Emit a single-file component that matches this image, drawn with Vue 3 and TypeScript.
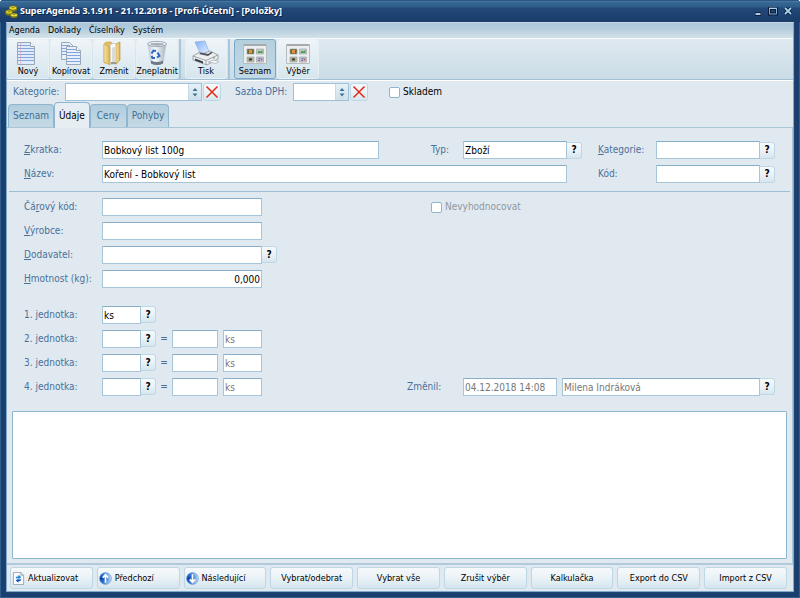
<script setup lang="ts">
import { ref } from 'vue'

interface Tool {
  label: string
  icon: string
  active?: boolean
}

interface UnitRow {
  n: number
  unit: string
  factor: string
  base: string
}

const menu: string[] = ['Agenda', 'Doklady', 'Číselníky', 'Systém']

const toolGroups: Tool[][] = [
  [
    { label: 'Nový', icon: 'new' },
    { label: 'Kopírovat', icon: 'copy' },
    { label: 'Změnit', icon: 'edit' },
    { label: 'Zneplatnit', icon: 'bin' },
  ],
  [{ label: 'Tisk', icon: 'print' }],
  [
    { label: 'Seznam', icon: 'grid', active: true },
    { label: 'Výběr', icon: 'grid' },
  ],
]

const tabs: string[] = ['Seznam', 'Údaje', 'Ceny', 'Pohyby']
const activeTab = ref('Údaje')

const shortName = ref('Bobkový list 100g')
const fullName = ref('Koření - Bobkový list')
const kind = ref('Zboží')
const category = ref('')
const code = ref('')
const barcode = ref('')
const maker = ref('')
const supplier = ref('')
const weight = ref('0,000')
const note = ref('')
const inStock = ref(false)

const firstUnit = ref('ks')
const units = ref<UnitRow[]>([
  { n: 2, unit: '', factor: '', base: 'ks' },
  { n: 3, unit: '', factor: '', base: 'ks' },
  { n: 4, unit: '', factor: '', base: 'ks' },
])

const actions: { label: string; icon?: string }[] = [
  { label: 'Aktualizovat', icon: 'refresh' },
  { label: 'Předchozí', icon: 'up' },
  { label: 'Následující', icon: 'down' },
  { label: 'Vybrat/odebrat' },
  { label: 'Vybrat vše' },
  { label: 'Zrušit výběr' },
  { label: 'Kalkulačka' },
  { label: 'Export do CSV' },
  { label: 'Import z CSV' },
]
</script>

<template>
  <div class="window">
    <svg class="defs" width="0" height="0" aria-hidden="true">
      <defs>
        <linearGradient id="folder" x1="0" x2="1"><stop offset="0" stop-color="#f9e5a4" /><stop offset="1" stop-color="#d9af55" /></linearGradient>
        <linearGradient id="glass" x1="0" x2="1"><stop offset="0" stop-color="#c3cdd6" /><stop offset=".4" stop-color="#f6fafc" /><stop offset="1" stop-color="#a9b5bf" /></linearGradient>
        <linearGradient id="paper" x1="0" y1="0" x2="1" y2="1"><stop offset="0" stop-color="#7fb0ff" /><stop offset="1" stop-color="#eaf3ff" /></linearGradient>
        <radialGradient id="ball" cx=".15" cy=".5" r=".9"><stop offset="0" stop-color="#0a3fa8" /><stop offset=".5" stop-color="#3f86d8" /><stop offset="1" stop-color="#e4eefa" /></radialGradient>
      </defs>
    </svg>

    <header class="titlebar">
      <svg class="logo" viewBox="0 0 13 13" aria-hidden="true">
        <ellipse cx="8" cy="4" rx="4" ry="2.6" fill="#8a8210" />
        <ellipse cx="8" cy="3" rx="4" ry="2.2" fill="#e8d92c" stroke="#4b4a0c" stroke-width=".6" />
        <ellipse cx="4" cy="8" rx="3.6" ry="2.6" fill="#8a8210" />
        <ellipse cx="4" cy="7" rx="3.6" ry="2.2" fill="#d8cc24" stroke="#4b4a0c" stroke-width=".6" />
        <ellipse cx="9" cy="11" rx="3.6" ry="1.9" fill="#8a8210" />
        <ellipse cx="9" cy="10" rx="3.6" ry="1.9" fill="#f1e545" stroke="#4b4a0c" stroke-width=".6" />
        <path d="M6.5 2.6h3M3 6.6h2.4M7.5 9.6h3" stroke="#7d760c" stroke-width=".8" />
      </svg>
      <h1>SuperAgenda 3.1.911 - 21.12.2018 - [Profi-Účetní] - [Položky]</h1>
      <div class="winbuttons">
        <button type="button" aria-label="Minimalizovat">
          <svg viewBox="0 0 10 10"><path d="M2 8h6" stroke="#081c3a" stroke-width="3.6" /><path d="M2.500 8h5" stroke="#c4dfee" stroke-width="1.800" /></svg>
        </button>
        <button type="button" aria-label="Maximalizovat">
          <svg viewBox="0 0 10 10"><path d="M1.500 2.500h7v5.500h-7z" fill="#1d4473" stroke="#081c3a" stroke-width="3" /><path d="M1.500 2.500h7v5.500h-7z" fill="none" stroke="#86b2cf" /><path d="M1 2.200h8" stroke="#c4dfee" /></svg>
        </button>
        <button type="button" aria-label="Zavřít">
          <svg viewBox="0 0 10 10"><path d="M2 2l6 6M8 2l-6 6" stroke="#081c3a" stroke-width="3.600" /><path d="M2 2l6 6M8 2l-6 6" stroke="#a9d2ea" stroke-width="1.800" /></svg>
        </button>
      </div>
    </header>

    <div class="body">
      <nav class="menubar">
        <a v-for="m in menu" :key="m" href="#">{{ m }}</a>
      </nav>

      <div class="toolbar">
        <div v-for="(group, i) in toolGroups" :key="i" class="toolgroup">
          <button v-for="t in group" :key="t.label" type="button" class="tool" :class="{ active: t.active }">
            <svg v-if="t.icon === 'new'" viewBox="0 0 28 26">
              <path d="M3.500 2.500h13l4 4v18h-17z" fill="#dfeafa" stroke="#9aa8b8" />
              <path d="M16.500 2.500v4h4" fill="#fff" stroke="#9aa8b8" />
              <path d="M4 5.500h12M4 8.500h16M4 11.500h16M4 14.500h16M4 17.500h16M4 20.500h16" stroke="#82a6dc" />
              <path d="M6.500 3v21" stroke="#d99ba6" stroke-width=".5" />
            </svg>
            <svg v-else-if="t.icon === 'copy'" viewBox="0 0 28 26">
              <path d="M4.500 2.500h8l4 4v13h-12z" fill="#e6effb" stroke="#9aa8b8" />
              <path d="M5 5.500h8M5 8.500h8M5 11.500h8M5 14.500h8" stroke="#82a6dc" />
              <path d="M9.500 6.500h10l4 4v14h-14z" fill="#e6effb" stroke="#9aa8b8" />
              <path d="M19.500 6.500v4h4" fill="#fff" stroke="#9aa8b8" />
              <path d="M10 9.500h9M10 12.500h13M10 15.500h13M10 18.500h13M10 21.500h13" stroke="#82a6dc" />
            </svg>
            <svg v-else-if="t.icon === 'edit'" viewBox="0 0 28 26">
              <path d="M4 4l2-2h5l2 2v19H4z" fill="#e4bd66" stroke="#c9a14c" stroke-width=".6" />
              <path d="M10 5q3-3 7-1v20h-7z" fill="#fbfbf8" stroke="#b5b5ad" stroke-width=".6" />
              <path d="M12 8q2-2 3 0v14h-3z" fill="#d9dbd9" />
              <path d="M16 4l4-2v18l-4 4z" fill="url(#folder)" stroke="#b98a31" stroke-width=".6" />
              <path d="M4 4l6 3.500V25l-6-3z" fill="url(#folder)" stroke="#c9a14c" stroke-width=".6" />
              <path d="M11 22h5v2h-5z" fill="#9b9b94" />
            </svg>
            <svg v-else-if="t.icon === 'bin'" viewBox="0 0 28 26">
              <path d="M5 4l3 19q6 3 12 0l3-19z" fill="url(#glass)" stroke="#b4c0ca" stroke-width=".6" />
              <path d="M8 20.500q6 3 12 0v3q-6 3-12 0z" fill="#6f7a84" />
              <ellipse cx="14" cy="4" rx="9.500" ry="2.600" fill="#eef2f5" stroke="#8d98a2" stroke-width=".8" />
              <ellipse cx="14" cy="4.300" rx="7" ry="1.400" fill="#a3afb9" />
              <g fill="none" stroke="#2a67c8" stroke-width="2"><path d="M8.500 13.500l2-3 2.500.5" /><path d="M14.500 12.500l2 3.500-2.500 1.500" /><path d="M12 18H9.500L8.500 16" /></g>
            </svg>
            <svg v-else-if="t.icon === 'print'" viewBox="0 0 28 26">
              <path d="M3 2l10-1 4 11-8 3z" fill="url(#paper)" stroke="#8ba4cc" stroke-width=".6" />
              <path d="M1 16l7-4 2 2 8-3 8 4v4l-11 6-14-5z" fill="#eceef0" stroke="#81868c" stroke-width=".7" />
              <path d="M1 16l13 4.500L26 15M14 20.500V25" fill="none" stroke="#8d9298" stroke-width=".8" />
              <path d="M3 18.500l8 3v2l-8-3z" fill="#373c42" />
              <path d="M7 14l2-1.500 7 1.500 3-2 2 .5-5 3.500z" fill="#4f555c" />
              <path d="M16 22l8 1.500 3-2-5-1.500z" fill="#f6f8fa" stroke="#8d9298" stroke-width=".5" />
              <circle cx="22" cy="18" r=".8" fill="#47a055" />
            </svg>
            <svg v-else viewBox="0 0 28 26">
              <path d="M2.500 4.500h23v19h-23z" fill="#eceeef" stroke="#b7bcbf" />
              <path d="M3 5h22" stroke="#a6abae" stroke-width="2" />
              <g stroke="#a0a6a8" stroke-width=".7"><path fill="#6b6236" d="M6 9h7v5H6z" /><path fill="#c3d0c4" d="M15.500 9h7v5h-7z" /><path fill="#b9baa6" d="M6 17h7v5H6z" /><path fill="#bfc5d3" d="M15.500 17h7v5h-7z" /></g>
              <path d="M8 10h3v3H8z" fill="#e79334" /><path d="M16.500 12.500l1.500-2 1.300 1 2.200-1.500v3h-5z" fill="#4b9d55" />
              <path d="M7.500 18.500l3-.5 1 2-3 1z" fill="#4a4930" /><path d="M17 20h2v1h-2zM20 18.500h1.500v2H20z" fill="#c3616d" /><path d="M17.500 18h2v1.500h-2z" fill="#5b7fc4" />
            </svg>
            <span>{{ t.label }}</span>
          </button>
        </div>
      </div>

      <div class="filters">
        <label for="f-cat">Kategorie:</label>
        <span class="combo wide">
          <select id="f-cat"><option></option></select>
          <svg viewBox="0 0 12 16"><path d="M3.500 7L6 4l2.500 3zM3.500 9.500h5L6 12.500z" fill="#3d7299" /></svg>
        </span>
        <button type="button" class="clear" aria-label="Zrušit kategorii">
          <svg viewBox="0 0 14 14"><path d="M1.500 1.500l11 11M12.500 1.500l-11 11" stroke="#e32a14" stroke-width="1.500" /></svg>
        </button>
        <label for="f-vat" class="vat">Sazba DPH:</label>
        <span class="combo">
          <select id="f-vat"><option></option></select>
          <svg viewBox="0 0 12 16"><path d="M3.500 7L6 4l2.500 3zM3.500 9.500h5L6 12.500z" fill="#3d7299" /></svg>
        </span>
        <button type="button" class="clear" aria-label="Zrušit sazbu">
          <svg viewBox="0 0 14 14"><path d="M1.500 1.500l11 11M12.500 1.500l-11 11" stroke="#e32a14" stroke-width="1.500" /></svg>
        </button>
        <label class="check stock"><input v-model="inStock" type="checkbox" />Skladem</label>
      </div>

      <div class="tabs" role="tablist">
        <button
          v-for="t in tabs"
          :key="t"
          type="button"
          role="tab"
          :aria-selected="t === activeTab"
          :class="{ active: t === activeTab }"
          @click="activeTab = t"
        >{{ t }}</button>
      </div>

      <main class="page">
        <section class="fields head">
          <label for="short"><u>Z</u>kratka:</label>
          <input id="short" v-model="shortName" type="text" />
          <label for="kind" class="typ">Typ:</label>
          <input id="kind" v-model="kind" type="text" />
          <button type="button" class="help">?</button>
          <label for="cat" class="second"><u>K</u>ategorie:</label>
          <input id="cat" v-model="category" type="text" />
          <button type="button" class="help">?</button>

          <label for="full"><u>N</u>ázev:</label>
          <input id="full" v-model="fullName" type="text" class="span-name" />
          <label for="code" class="second code-label">Kód:</label>
          <input id="code" v-model="code" type="text" />
          <button type="button" class="help">?</button>
        </section>

        <section class="fields details">
          <label for="bar" class="first">Čá<u>r</u>ový kód:</label>
          <input id="bar" v-model="barcode" type="text" class="mid" />
          <label class="check muted noeval"><input type="checkbox" disabled />Nevyhodnocovat</label>

          <label for="maker" class="first"><u>V</u>ýrobce:</label>
          <input id="maker" v-model="maker" type="text" class="mid" />

          <label for="supp" class="first"><u>D</u>odavatel:</label>
          <div class="line">
            <input id="supp" v-model="supplier" type="text" class="mid" />
            <button type="button" class="help">?</button>
          </div>

          <label for="weight" class="first"><u>H</u>motnost (kg):</label>
          <input id="weight" v-model="weight" type="text" class="mid number" />
        </section>

        <section class="fields units">
          <label for="unit1" class="first">1. jednotka:</label>
          <div class="line">
            <input id="unit1" v-model="firstUnit" type="text" class="unit" />
            <button type="button" class="help">?</button>
          </div>
          <template v-for="u in units" :key="u.n">
            <label :for="'unit' + u.n" class="first">{{ u.n }}. jednotka:</label>
            <div class="line">
              <input :id="'unit' + u.n" v-model="u.unit" type="text" class="unit" />
              <button type="button" class="help">?</button>
              <span class="eq">=</span>
              <input v-model="u.factor" type="text" class="factor" :aria-label="'Přepočet ' + u.n" />
              <input :value="u.base" type="text" class="base" disabled :aria-label="'Základní jednotka ' + u.n" />
            </div>
          </template>
          <label for="changed" class="changed-label">Změnil:</label>
          <div class="line changed">
            <input id="changed" type="text" class="date" value="04.12.2018 14:08" disabled />
            <input type="text" class="user" value="Milena Indráková" disabled aria-label="Uživatel" />
            <button type="button" class="help">?</button>
          </div>
        </section>

        <textarea v-model="note" aria-label="Poznámka"></textarea>
      </main>

      <footer class="actions">
        <button v-for="a in actions" :key="a.label" type="button" :class="{ iconic: a.icon }">
          <svg v-if="a.icon === 'refresh'" viewBox="0 0 14 14">
            <path d="M1.500.500h8l3 3v10h-11z" fill="#fafcfe" stroke="#9aa5b0" />
            <path d="M9.500.500v3h3" fill="none" stroke="#9aa5b0" />
            <path d="M4 7q0-2.500 3-2.500V3l3 2.500L7 8V6.500q-1.500 0-3 .5z" fill="#1f86dc" />
            <path d="M10 7.500q0 2.500-3 2.500v1.500L4 9.200 7 7v1.300q1.500 0 3-.8z" fill="#1552b4" />
          </svg>
          <svg v-else-if="a.icon" viewBox="0 0 14 14">
            <circle cx="7" cy="7" r="6.400" fill="url(#ball)" stroke="#5c8fcd" stroke-width=".6" />
            <path v-if="a.icon === 'up'" d="M7 11.500V3.500M4 6l3-3 3 3" fill="none" stroke="#fff" stroke-width="1.800" />
            <path v-else d="M7 2.500v8M4 8l3 3 3-3" fill="none" stroke="#fff" stroke-width="1.800" />
          </svg>
          <span>{{ a.label }}</span>
        </button>
      </footer>
    </div>
  </div>
</template>

<style>
body {
  margin: 0;
  background: #fff;
}
</style>

<style scoped>
* {
  box-sizing: border-box;
}

.window {
  display: flex;
  flex-direction: column;
  min-height: 100vh;
  padding: 0 6px 6px;
  border-radius: 4px 4px 0 0;
  background: #1d4473;
  box-shadow: inset 1px 1px #2f5f8f, inset -1px -1px #2f5f8f, inset 5px -5px #1a3e6d, inset -5px 0 #1a3e6d;
  font: 10px/14px "DejaVu Sans Condensed", "DejaVu Sans", "Noto Sans", sans-serif;
  color: #000;
}

.defs {
  position: absolute;
}

button,
input,
select,
textarea {
  margin: 0;
  font: inherit;
  color: inherit;
}

button {
  padding: 0;
  border: 1px solid #bdd7e4;
  border-radius: 3px;
  background: linear-gradient(#f6f9fc, #eaf2f7 50%, #d5e6ee);
}

.titlebar {
  display: flex;
  align-items: center;
  height: 22px;
  margin: 0 -6px;
  padding: 0 7px 0 5px;
  border-radius: 4px 4px 0 0;
  background: linear-gradient(#2b5583 0 1px, #4478a2 1px 2px, #386894 2px, #2d5c8a 7px, #23497a 8px, #193c69);
}

.logo {
  width: 13px;
  height: 13px;
}

h1 {
  flex: 1;
  margin: 0 0 0 2px;
  font: bold 9px/14px "Noto Sans", "Open Sans", sans-serif;
  color: #fff;
  text-shadow: 1px 1px #0c2444;
}

.winbuttons {
  display: flex;
  gap: 5px;
}

.winbuttons button {
  width: 10px;
  height: 10px;
  border: 0;
  background: none;
}

svg {
  display: block;
}

.body {
  display: flex;
  flex: 1;
  flex-direction: column;
  border: 1px solid #7fa9c9;
  border-top-color: #c4d9e5;
  background: #e1e9f0;
}

.menubar {
  display: flex;
  gap: 8px;
  height: 16px;
  padding: 0 2px;
  border-bottom: 1px solid #f6fafc;
  background: linear-gradient(#aac6d8, #b4cddc 40%, #d3e2ea);
  font-size: 9px;
}

.menubar a {
  color: #000;
  text-decoration: none;
}

.toolbar {
  display: flex;
  height: 41px;
  border-bottom: 1px solid #a3bfd3;
  background: linear-gradient(#e1e9f0, #c9dce6);
}

.toolgroup {
  display: flex;
  gap: 1px;
}

.toolgroup + .toolgroup {
  margin-left: 1px;
  padding-left: 4px;
  border-left: 2px solid #a9c6d8;
}

.tool {
  display: flex;
  flex-direction: column;
  align-items: center;
  width: 42px;
  height: 40px;
  border-color: #e6f0f5;
  background: linear-gradient(#eff4f8, #e2edf3 50%, #d7e6ed);
  font-size: 9px;
  line-height: 10px;
}

.tool svg {
  width: 28px;
  height: 26px;
}

.tool.active {
  border-color: #7ba8c6;
  background: linear-gradient(#b4cfdf, #c3d9e5);
}

.filters {
  display: flex;
  align-items: center;
  height: 23px;
  padding: 0 6px;
  border-top: 1px solid #fff;
  color: #47709b;
}

.combo {
  display: flex;
  align-items: center;
  width: 56px;
  height: 18px;
  border: 1px solid #9fc0d6;
  background: linear-gradient(#e6f0f6, #cfe0ea);
}

.filters > label:first-child {
  width: 52px;
}

.combo.wide {
  width: 137px;
}

.combo select {
  flex: 1;
  min-width: 0;
  height: 16px;
  padding: 0 2px;
  border: 0;
  border-right: 1px solid #c4dae6;
  border-radius: 0;
  background: #fff;
  appearance: none;
}

.combo svg {
  width: 12px;
  height: 16px;
}

.clear {
  display: grid;
  place-items: center;
  width: 18px;
  height: 18px;
  margin-left: 1px;
}

.clear svg {
  width: 14px;
  height: 14px;
}

.vat {
  width: 58px;
  margin-left: 14px;
}

.check {
  display: flex;
  align-items: center;
  gap: 3px;
}

.check input {
  width: 11px;
  height: 11px;
  border: 1px solid #8fb4cd;
  border-radius: 2px;
  background: #fff;
  appearance: none;
}

.check input:checked {
  background: #47709b;
}

.stock {
  margin-left: 21px;
  color: #000;
}

.tabs {
  display: flex;
  align-items: flex-end;
  height: 24px;
  padding: 0 1px;
}

.tabs button {
  height: 23px;
  padding: 0 4px;
  border-color: #8fb6cf;
  border-bottom: 0;
  border-radius: 4px 4px 0 0;
  background: linear-gradient(#b3cddd, #c5dae6);
  color: #3f6f99;
}

.tabs button:nth-child(3) {
  padding: 0 6px;
}

.tabs .active {
  z-index: 1;
  height: 26px;
  margin-bottom: -1px;
  background: #e6eef4;
  color: #000;
}

.page {
  display: flex;
  flex: 1;
  flex-direction: column;
  border-top: 1px solid #a9c6d8;
  border-right: 1px solid #a9c6d8;
  border-bottom: 2px solid #b0cadb;
}

.fields {
  display: grid;
  grid-template-columns: 78px minmax(0, 1fr) 84px 104px 15px 74px 104px 15px;
  grid-auto-rows: 18px;
  row-gap: 6px;
  align-items: center;
  padding: 0 17px;
  color: #47709b;
}

.head {
  margin: 0 2px;
  padding: 13px 15px 8px;
  border-bottom: 1px solid #9fbdd3;
}

.details {
  padding-top: 6px;
}

.units {
  padding-top: 18px;
}

.first {
  grid-column: 1;
}

.first + * {
  grid-column: 2;
}

.typ {
  padding-left: 52px;
}

.second {
  padding-left: 16px;
}

.code-label {
  grid-column: 6;
}

.span-name {
  grid-column: 2 / 5;
}

input[type='text'] {
  width: 100%;
  min-width: 0;
  height: 18px;
  padding: 0 1px;
  border: 1px solid #a5c5d9;
  border-top-color: #86aecb;
  border-radius: 1px;
  background: #fff;
  color: #000;
}

input[type='text']:disabled {
  color: #777;
}

.line {
  display: flex;
}

.fields input.mid {
  flex: none;
  width: 160px;
}

.number {
  text-align: right;
}

.help {
  flex: none;
  width: 15px;
  height: 17px;
  border-left: 0;
  border-radius: 0 3px 3px 0;
  color: #000;
  font-weight: bold;
}

.line .unit {
  width: 39px;
}

.eq {
  width: 16px;
  line-height: 18px;
  text-align: center;
}

.line .factor {
  width: 46px;
  margin-right: 5px;
}

.line .base {
  width: 39px;
}

.noeval {
  grid-column: 3 / 6;
  padding-left: 52px;
}

.muted {
  color: #8e979e;
}

.changed-label {
  grid-row: 4;
  grid-column: 3;
  padding-left: 28px;
}

.changed {
  grid-row: 4;
  grid-column: 4 / 9;
}

.changed .date {
  width: 94px;
  margin-right: 5px;
}

.changed .user {
  flex: 1;
}

textarea {
  display: block;
  flex: 1;
  min-height: 60px;
  margin: 15px 5px 4px;
  border: 1px solid #8fb6cf;
  border-radius: 1px;
  background: #fff;
  resize: none;
}

.actions {
  display: grid;
  grid-template-columns: repeat(9, 1fr);
  gap: 4px;
  padding: 2px 6px 2px 3px;
}

.actions button {
  display: flex;
  align-items: center;
  justify-content: center;
  height: 22px;
  font-size: 9px;
  white-space: nowrap;
}

.actions .iconic {
  justify-content: flex-start;
  gap: 3px;
  padding-left: 1px;
}

.actions svg {
  width: 13px;
  height: 13px;
}
</style>
